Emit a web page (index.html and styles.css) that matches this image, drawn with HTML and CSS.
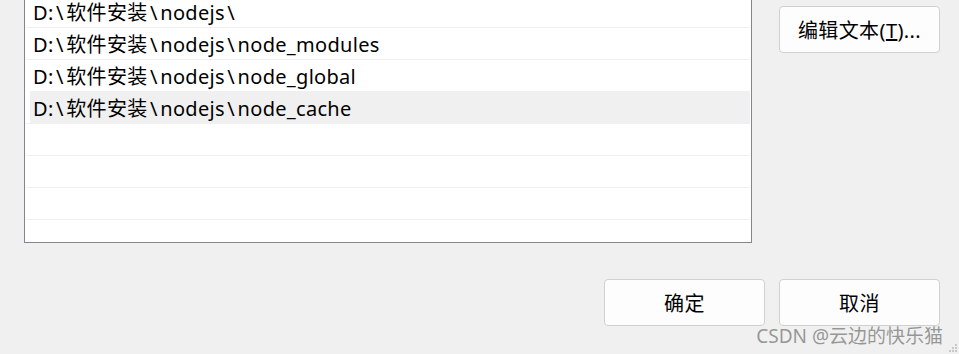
FILE: index.html
```html
<!DOCTYPE html>
<html lang="zh-CN">
<head>
    <meta charset="UTF-8">
    <title>编辑环境变量</title>
    <link rel="stylesheet" href="styles.css">
</head>
<body>
    <div class="dialog">
        <div class="main">
            <ul class="path-list">
                <li class="path-row">D:<span class="sep">\</span>软件安装<span class="sep">\</span>nodejs<span class="sep">\</span></li>
                <li class="path-row">D:<span class="sep">\</span>软件安装<span class="sep">\</span>nodejs<span class="sep">\</span>node_modules</li>
                <li class="path-row">D:<span class="sep">\</span>软件安装<span class="sep">\</span>nodejs<span class="sep">\</span>node_global</li>
                <li class="path-row selected">D:<span class="sep">\</span>软件安装<span class="sep">\</span>nodejs<span class="sep">\</span>node_cache</li>
                <li class="path-row"></li>
                <li class="path-row"></li>
                <li class="path-row"></li>
                <li class="path-row"></li>
            </ul>
            <div class="side">
                <button class="btn">编辑文本(<u>T</u>)...</button>
            </div>
        </div>
        <div class="footer">
            <button class="btn">确定</button>
            <button class="btn">取消</button>
        </div>
        <div class="watermark">CSDN @云边的快乐猫</div>
        <svg class="grip" width="9" height="9" viewBox="0 0 9 9">
            <rect x="6" y="0" width="2" height="2" fill="#c8c8c8"/>
            <rect x="3" y="3" width="2" height="2" fill="#c8c8c8"/>
            <rect x="6" y="3" width="2" height="2" fill="#c8c8c8"/>
            <rect x="0" y="6" width="2" height="2" fill="#c8c8c8"/>
            <rect x="3" y="6" width="2" height="2" fill="#c8c8c8"/>
            <rect x="6" y="6" width="2" height="2" fill="#c8c8c8"/>
        </svg>
    </div>
</body>
</html>
```

FILE: styles.css
```css
body {
    margin: 0;
    background-color: #f0f0f0;
    font-family: "Noto Sans", "Noto Sans CJK SC", sans-serif;
    color: #000;
    overflow: hidden;
}

.dialog {
    position: relative;
    height: 354px;
    padding: 0 19px 0 24px;
}

.main {
    display: flex;
    align-items: flex-start;
    gap: 27px;
}

.path-list {
    list-style: none;
    margin: -6px 0 0 0;
    padding: 0 1px;
    width: 724px;
    height: 247px;
    overflow: hidden;
    background-color: #fff;
    border: 1px solid #84848c;
    flex-shrink: 0;
}

.path-row {
    height: 31px;
    border-top: 1px solid #efefef;
    padding-left: 7px;
    font-size: 20px;
    letter-spacing: 0.3px;
    line-height: 34px;
    white-space: nowrap;
}

.path-row .sep {
    padding: 0 2.5px;
}

.path-row.selected {
    margin-left: 4px;
    padding-left: 3px;
    background-color: #f0f0f0;
    border-top-color: #f0f0f0;
}

.side {
    padding-top: 6px;
}

.btn {
    width: 161px;
    height: 47px;
    background-color: #fdfdfd;
    border: 1px solid #d0d0d0;
    border-radius: 4px;
    font-family: "Noto Sans", "Noto Sans CJK SC", sans-serif;
    font-size: 20px;
    letter-spacing: 0.4px;
    color: #000;
    padding: 0;
}

.footer {
    display: flex;
    justify-content: flex-end;
    gap: 14px;
    margin-top: 36px;
}

.watermark {
    position: absolute;
    right: 16px;
    top: 321px;
    font-size: 19px;
    color: rgba(120, 120, 120, 0.75);
}

.grip {
    position: absolute;
    right: 1px;
    bottom: 1px;
}
```
